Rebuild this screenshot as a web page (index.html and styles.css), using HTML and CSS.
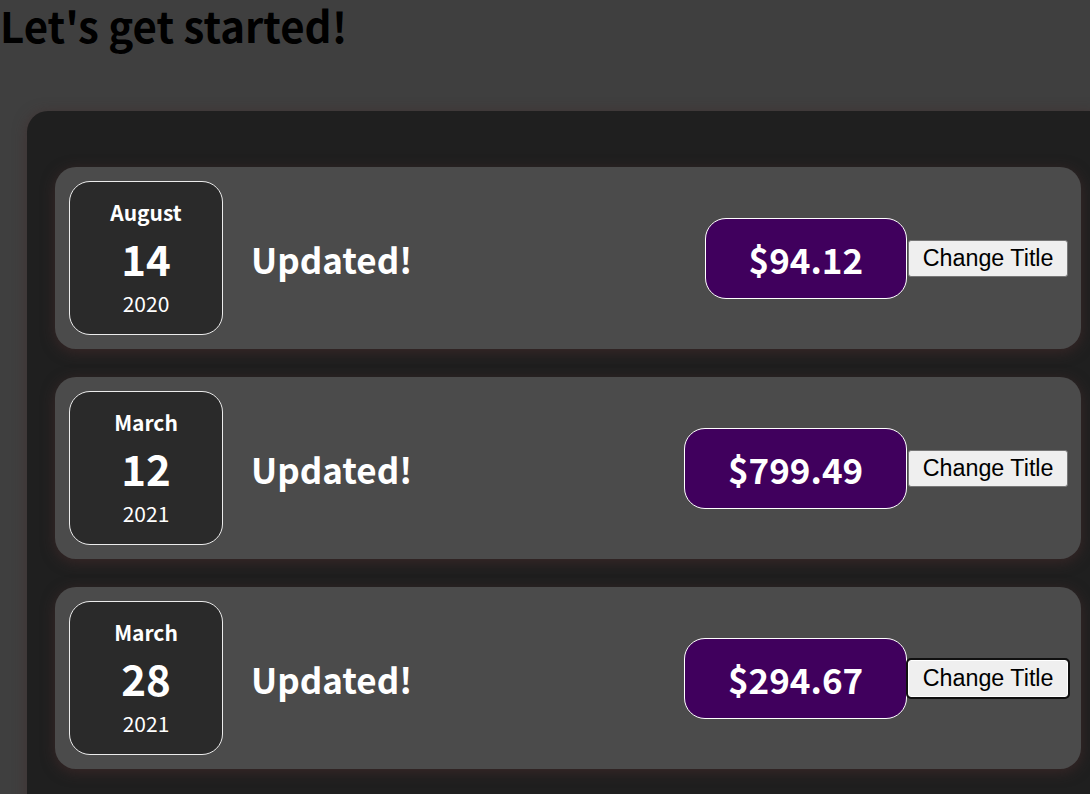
FILE: index.html
```html
<!DOCTYPE html>
<html lang="en">
<head>
<meta charset="utf-8">
<title>Expenses</title>
<link rel="stylesheet" href="styles.css">
</head>
<body>
<h2 class="title">Let's get started!</h2>
<div class="card expenses">
  <div class="card expense-item">
    <div class="expense-date">
      <div class="expense-date__month">August</div>
      <div class="expense-date__day">14</div>
      <div class="expense-date__year">2020</div>
    </div>
    <div class="expense-item__description">
      <h2>Updated!</h2>
      <div class="expense-item__price">$94.12</div>
    </div>
    <button class="btn">Change Title</button>
  </div>
  <div class="card expense-item">
    <div class="expense-date">
      <div class="expense-date__month">March</div>
      <div class="expense-date__day">12</div>
      <div class="expense-date__year">2021</div>
    </div>
    <div class="expense-item__description">
      <h2>Updated!</h2>
      <div class="expense-item__price">$799.49</div>
    </div>
    <button class="btn">Change Title</button>
  </div>
  <div class="card expense-item">
    <div class="expense-date">
      <div class="expense-date__month">March</div>
      <div class="expense-date__day">28</div>
      <div class="expense-date__year">2021</div>
    </div>
    <div class="expense-item__description">
      <h2>Updated!</h2>
      <div class="expense-item__price">$294.67</div>
    </div>
    <button class="btn btn--focus">Change Title</button>
  </div>
</div>
</body>
</html>
```
FILE: styles.css
```css
html {
  font-family: "Noto Sans CJK JP", "Noto Sans", sans-serif;
  overflow: hidden;
}
body {
  margin: 0;
  background-color: #3f3f3f;
  overflow: hidden;
}
.title {
  margin: -6px 0 56px;
  font-size: 42px;
  font-weight: bold;
  color: #000;
}
.card {
  border-radius: 21px;
  box-shadow: 0 2px 14px rgba(70, 40, 40, 0.55);
}
.expenses {
  box-sizing: border-box;
  margin-left: 27px;
  width: 1082px;
  padding: 28px;
  background-color: #1f1f1f;
}
.expense-item {
  display: flex;
  justify-content: space-between;
  align-items: center;
  padding: 14px 13px 14px 14px;
  margin: 28px 0;
  background-color: #4b4b4b;
  box-shadow: 0 3px 14px rgba(75, 45, 45, 0.6);
}
.expense-date {
  display: flex;
  flex-direction: column;
  align-items: center;
  justify-content: center;
  box-sizing: border-box;
  width: 154px;
  height: 154px;
  padding-bottom: 2px;
  border: 1px solid #ececec;
  background-color: #2a2a2a;
  color: #fff;
  border-radius: 21px;
}
.expense-date__month {
  font-size: 21px;
  font-weight: bold;
}
.expense-date__year {
  font-size: 21px;
}
.expense-date__day {
  font-size: 42px;
  font-weight: bold;
}
.expense-item__description {
  display: flex;
  flex-direction: row;
  align-items: center;
  justify-content: flex-start;
  flex: 1;
}
.expense-item__description h2 {
  flex: 1;
  margin: 0 28px;
  font-size: 35px;
  color: #fff;
}
.expense-item__price {
  font-size: 35px;
  font-weight: bold;
  color: #fff;
  background-color: #40005d;
  border: 1px solid #fff;
  padding: 14px 43px;
  border-radius: 21px;
}
.btn {
  font-family: "Liberation Sans", Arial, sans-serif;
  font-size: 23.3px;
  padding: 4px 13.5px;
  margin-left: 1px;
  background-color: #efefef;
  color: #000;
  border: 1px solid #767676;
  border-radius: 3px;
}
.btn--focus {
  border: 1px solid #fff;
  outline: 2px solid #101010;
}
```
